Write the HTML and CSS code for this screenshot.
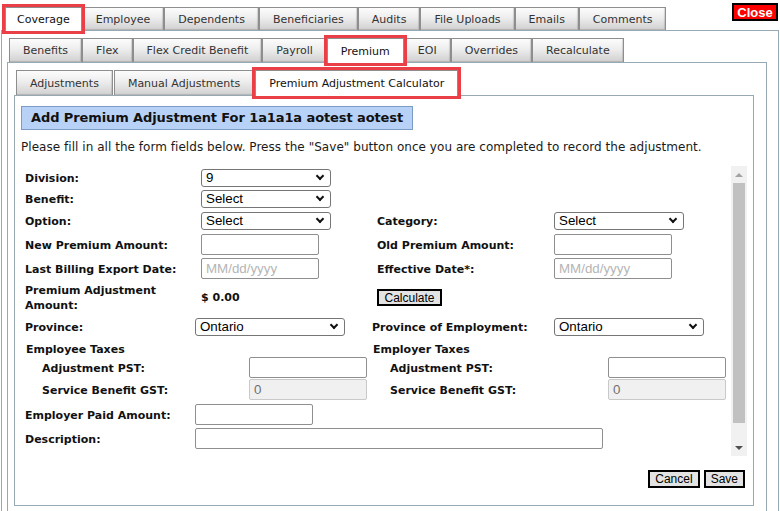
FILE: index.html
```html
<!DOCTYPE html>
<html lang="en">
<head>
<meta charset="utf-8">
<title>Premium Adjustment Calculator</title>
<link rel="stylesheet" href="styles.css">
</head>
<body>
<div class="topbar">
  <div class="tabs tabs1">
    <span class="tab active mark">Coverage</span>
    <span class="tab">Employee</span>
    <span class="tab">Dependents</span>
    <span class="tab">Beneficiaries</span>
    <span class="tab">Audits</span>
    <span class="tab">File Uploads</span>
    <span class="tab">Emails</span>
    <span class="tab">Comments</span>
  </div>
  <button class="close" type="button">Close</button>
</div>
<div class="panel p1">
  <div class="tabs tabs2">
    <span class="tab">Benefits</span>
    <span class="tab">Flex</span>
    <span class="tab">Flex Credit Benefit</span>
    <span class="tab">Payroll</span>
    <span class="tab active mark">Premium</span>
    <span class="tab">EOI</span>
    <span class="tab">Overrides</span>
    <span class="tab">Recalculate</span>
  </div>
  <div class="panel p2">
    <div class="tabs tabs3">
      <span class="tab">Adjustments</span>
      <span class="tab">Manual Adjustments</span>
      <span class="tab active mark">Premium Adjustment Calculator</span>
    </div>
    <div class="panel p3">
      <div class="title">Add Premium Adjustment For 1a1a1a aotest aotest</div>
      <p class="intro">Please fill in all the form fields below. Press the "Save" button once you are completed to record the adjustment.</p>
      <div class="scroller">
        <div class="form">
          <div class="row cols-a gap3">
            <label>Division:</label>
            <span class="sel w130"><select><option>9</option></select></span>
          </div>
          <div class="row cols-a gap4">
            <label>Benefit:</label>
            <span class="sel w130"><select><option>Select</option></select></span>
          </div>
          <div class="row cols-a gap4">
            <label>Option:</label>
            <span class="sel w130"><select><option>Select</option></select></span>
            <label>Category:</label>
            <span class="sel w130"><select><option>Select</option></select></span>
          </div>
          <div class="row cols-a gap3">
            <label>New Premium Amount:</label>
            <input class="txt w118" type="text">
            <label>Old Premium Amount:</label>
            <input class="txt w118" type="text">
          </div>
          <div class="row cols-a gap3">
            <label>Last Billing Export Date:</label>
            <input class="txt w118" type="text" placeholder="MM/dd/yyyy">
            <label>Effective Date*:</label>
            <input class="txt w118" type="text" placeholder="MM/dd/yyyy">
          </div>
          <div class="row cols-a amount">
            <label class="two">Premium Adjustment<br>Amount:</label>
            <span class="value">$ 0.00</span>
            <button class="btn calc" type="button">Calculate</button>
          </div>
          <div class="row cols-b gap4">
            <label>Province:</label>
            <span class="sel w150"><select><option>Ontario</option></select></span>
            <label>Province of Employment:</label>
            <span class="sel w150"><select><option>Ontario</option></select></span>
          </div>
          <div class="row cols-c heads">
            <span class="head">Employee Taxes</span>
            <span class="head">Employer Taxes</span>
          </div>
          <div class="row cols-d gap1">
            <label>Adjustment PST:</label>
            <input class="txt w118" type="text">
            <label>Adjustment PST:</label>
            <input class="txt w118" type="text">
          </div>
          <div class="row cols-d gap4">
            <label>Service Benefit GST:</label>
            <input class="txt w118" type="text" value="0" disabled>
            <label>Service Benefit GST:</label>
            <input class="txt w118" type="text" value="0" disabled>
          </div>
          <div class="row cols-e gap3">
            <label>Employer Paid Amount:</label>
            <input class="txt w118" type="text">
          </div>
          <div class="row cols-e">
            <label>Description:</label>
            <input class="txt w408" type="text">
          </div>
        </div>
        <div class="vscroll" aria-hidden="true">
          <span class="sb-btn"><span class="arrow up"></span></span>
          <span class="thumb"></span>
          <span class="sb-btn end"><span class="arrow down"></span></span>
        </div>
      </div>
      <div class="actions">
        <button class="btn" type="button">Cancel</button>
        <button class="btn" type="button">Save</button>
      </div>
    </div>
  </div>
</div>
</body>
</html>
```

FILE: styles.css
```css
* { box-sizing: border-box; }
html, body { margin: 0; background: #fff; }
body {
  width: 780px;
  height: 511px;
  overflow: hidden;
  font-family: "DejaVu Sans", Verdana, sans-serif;
  color: #111;
}

/* ---------- tabs ---------- */
.topbar {
  display: flex;
  align-items: flex-start;
  height: 30px;
  padding-left: 5px;
}
.tabs { display: flex; align-items: flex-end; }
.tabs1 { margin-top: 7px; }
.tabs2, .tabs3 { margin-left: 2px; }
.tab {
  display: flex;
  align-items: center;
  padding: 0 13px;
  border: 1px solid #8e8e8e;
  border-bottom: 0;
  font-size: 11px;
  color: #333;
  white-space: nowrap;
  background: linear-gradient(#fcfcfc, #ededed 45%, #d0d0d0);
  box-shadow: inset -1px -1px 1px rgba(0, 0, 0, 0.14);
}
.tabs3 .tab { margin-right: 1px; }
.tabs1 .tab { height: 23px; }
.tabs2 .tab { height: 24px; }
.tabs3 .tab { height: 25px; }
.tab.active {
  position: relative;
  z-index: 1;
  background: #fff;
  box-shadow: none;
  color: #111;
  margin-bottom: -1px;
}
.tabs1 .tab.active { height: 24px; padding: 0 11px; }
.tabs2 .tab.active { height: 25px; }
.tabs3 .tab.active { height: 26px; }
.mark { outline: 3px solid #ea3f47; outline-offset: 0; }

.close {
  margin: 3px 2px 0 auto;
  width: 46px;
  height: 18px;
  padding: 0;
  border: 2px solid #000;
  background: #f00;
  color: #fff;
  font: bold 13px "Liberation Sans", Arial, sans-serif;
  line-height: 13px;
}

/* ---------- panels ---------- */
.panel { border: 1px solid #97a9b5; background: #fff; }
.p1 { margin: 0 1px; border-bottom: 0; padding: 7px 11px 10px 5px; }
.p2 { padding: 7px 12px 10px 6px; border-bottom: 0; }
.p3 { padding: 10px 6px 17px 6px; }

.title {
  display: inline-block;
  height: 24px;
  padding: 0 9px 0 9px;
  border: 1px solid #7d9cc4;
  background: #b7d2f6;
  font-weight: bold;
  font-size: 13px;
  letter-spacing: -0.1px;
  line-height: 22px;
  color: #111;
}
.intro {
  margin: 9px 0 11px;
  font-size: 12px;
  letter-spacing: 0.04px;
  line-height: 16px;
  color: #1a1a1a;
}

/* ---------- scrolling form ---------- */
.scroller { display: flex; height: 290px; overflow: hidden; }
.form {
  flex: 1;
  padding: 3px 0 0 4px;
  font-size: 11px;
  font-weight: bold;
  color: #111;
}
.row { display: grid; align-items: center; }
.cols-a { grid-template-columns: 176px 176px 177px auto; }
.cols-b { grid-template-columns: 170px 177px 182px auto; }
.cols-c { grid-template-columns: 347px auto; padding-left: 1px; height: 17px; padding-top: 1px; }
.cols-d { grid-template-columns: 207px 141px 218px auto; padding-left: 17px; }
.cols-e { grid-template-columns: 170px auto; }
.gap1 { margin-bottom: 1px; }
.gap3 { margin-bottom: 3px; }
.gap4 { margin-bottom: 4px; }
.amount { height: 30px; margin-bottom: 6px; }
.two { line-height: 15px; }
.value { font-size: 11px; }
label { padding-top: 1px; }

.sel { position: relative; display: block; height: 18px; }
.sel select {
  appearance: none;
  -webkit-appearance: none;
  width: 100%;
  height: 18px;
  margin: 0;
  padding: 0 18px 0 4px;
  border: 1px solid #767676;
  border-radius: 3px;
  background: #fff;
  color: #000;
  font: 13.33px "Liberation Sans", Arial, sans-serif;
  line-height: 16px;
}
.sel::after {
  content: "";
  position: absolute;
  right: 8px;
  top: 4px;
  width: 4px;
  height: 4px;
  border-right: 2px solid #111;
  border-bottom: 2px solid #111;
  transform: rotate(45deg);
  pointer-events: none;
}
.w130 { width: 130px; }
.w150 { width: 150px; }
.w118 { width: 118px; }
.w408 { width: 408px; }

.txt {
  height: 21px;
  margin: 0;
  padding: 0 4px;
  border: 1px solid #8f8f8f;
  border-radius: 2px;
  background: #fff;
  color: #000;
  font: 13.33px "Liberation Sans", Arial, sans-serif;
}
.txt::placeholder { color: #b5b5b5; }
.txt:disabled {
  background: #f0f0f0;
  border-color: #c9c9c9;
  color: #707070;
}

.btn {
  height: 18px;
  padding: 0 5px;
  border: 2px solid #000;
  background: #e3e3e3;
  color: #000;
  font: 12px "Liberation Sans", Arial, sans-serif;
  line-height: 14px;
}
.calc { justify-self: start; width: 65px; height: 17px; padding: 0; }

/* ---------- fake vertical scrollbar ---------- */
.vscroll {
  width: 16px;
  display: flex;
  flex-direction: column;
  background: #f1f1f1;
}
.sb-btn {
  height: 17px;
  display: flex;
  align-items: center;
  justify-content: center;
}
.sb-btn.end { margin-top: auto; }
.thumb {
  height: 240px;
  margin: 0 2px;
  background: #c1c1c1;
}
.arrow { width: 0; height: 0; border-left: 4px solid transparent; border-right: 4px solid transparent; }
.arrow.up { border-bottom: 4px solid #a3a3a3; }
.arrow.down { border-top: 4px solid #505050; }

/* ---------- actions ---------- */
.actions {
  display: flex;
  justify-content: flex-end;
  gap: 4px;
  margin-top: 14px;
  padding-right: 2px;
}
.actions .btn { height: 18px; }
```
